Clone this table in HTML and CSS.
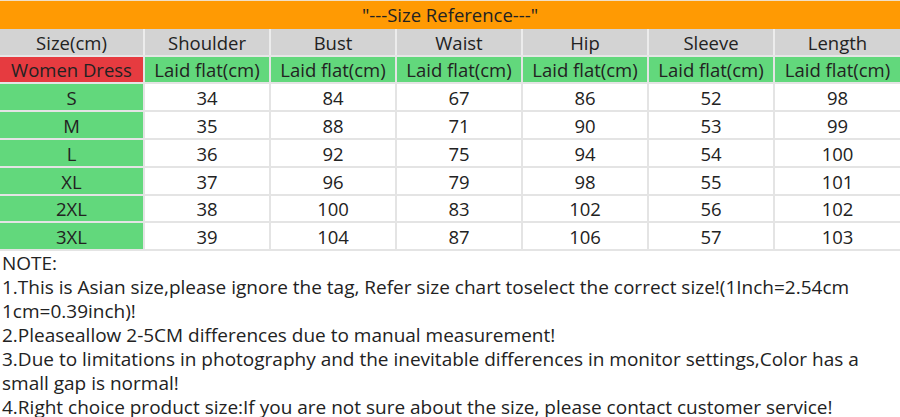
FILE: index.html
```html
<!DOCTYPE html>
<html>
<head>
<meta charset="utf-8">
<link rel="stylesheet" href="styles.css">
</head>
<body>
<table class="chart">
  <colgroup>
    <col class="c-first"><col><col><col><col><col><col>
  </colgroup>
  <tr class="title"><td colspan="7">"---Size Reference---"</td></tr>
  <tr class="head"><td>Size(cm)</td><td>Shoulder</td><td>Bust</td><td>Waist</td><td>Hip</td><td>Sleeve</td><td>Length</td></tr>
  <tr class="sub"><td class="red">Women Dress</td><td>Laid flat(cm)</td><td>Laid flat(cm)</td><td>Laid flat(cm)</td><td>Laid flat(cm)</td><td>Laid flat(cm)</td><td>Laid flat(cm)</td></tr>
  <tr><td class="size">S</td><td>34</td><td>84</td><td>67</td><td>86</td><td>52</td><td>98</td></tr>
  <tr><td class="size">M</td><td>35</td><td>88</td><td>71</td><td>90</td><td>53</td><td>99</td></tr>
  <tr><td class="size">L</td><td>36</td><td>92</td><td>75</td><td>94</td><td>54</td><td>100</td></tr>
  <tr><td class="size">XL</td><td>37</td><td>96</td><td>79</td><td>98</td><td>55</td><td>101</td></tr>
  <tr><td class="size">2XL</td><td>38</td><td>100</td><td>83</td><td>102</td><td>56</td><td>102</td></tr>
  <tr><td class="size">3XL</td><td>39</td><td>104</td><td>87</td><td>106</td><td>57</td><td>103</td></tr>
</table>
<div class="notes">
  <p>NOTE:</p>
  <p>1.This is Asian size,please ignore the tag, Refer size chart toselect the correct size!(1Inch=2.54cm 1cm=0.39inch)!</p>
  <p>2.Pleaseallow 2-5CM differences due to manual measurement!</p>
  <p>3.Due to limitations in photography and the inevitable differences in monitor settings,Color has a small gap is normal!</p>
  <p>4.Right choice product size:If you are not sure about the size, please contact customer service!</p>
</div>
</body>
</html>
```
FILE: styles.css
```css
html, body {
  margin: 0;
  padding: 0;
  background: #ffffff;
}
body {
  font-family: "Open Sans", "Liberation Sans", sans-serif;
  color: #222222;
  width: 900px;
  overflow: hidden;
}
.chart {
  width: 900px;
  border-collapse: collapse;
  table-layout: fixed;
  font-size: 18.5px;
}
.c-first {
  width: 144px;
}
.chart td {
  border: 2px solid #e4e4e4;
  height: 24.8px;
  padding: 1px 0 0;
  text-align: center;
  vertical-align: middle;
  line-height: 23px;
  white-space: nowrap;
  overflow: hidden;
}
.chart tr:first-child td {
  border-top: 1px solid #f0e0c8;
}
.chart td:first-child {
  border-left: 0;
}
.chart td:last-child {
  border-right: 0;
}
.title td {
  background: #ff9a03;
  border-color: #ff9a03;
}
.head td {
  background: #d3d3d3;
  border-color: #d3d3d3 #ececec #e6e6e6 #ececec;
}
.sub td {
  background: #62d87c;
}
.sub td.red {
  background: #e63b40;
}
.size {
  background: #62d87c;
}
.notes {
  font-size: 19px;
  line-height: 23.9px;
  padding: 1px 30px 0 2px;
}
.notes p {
  margin: 0;
}
```
